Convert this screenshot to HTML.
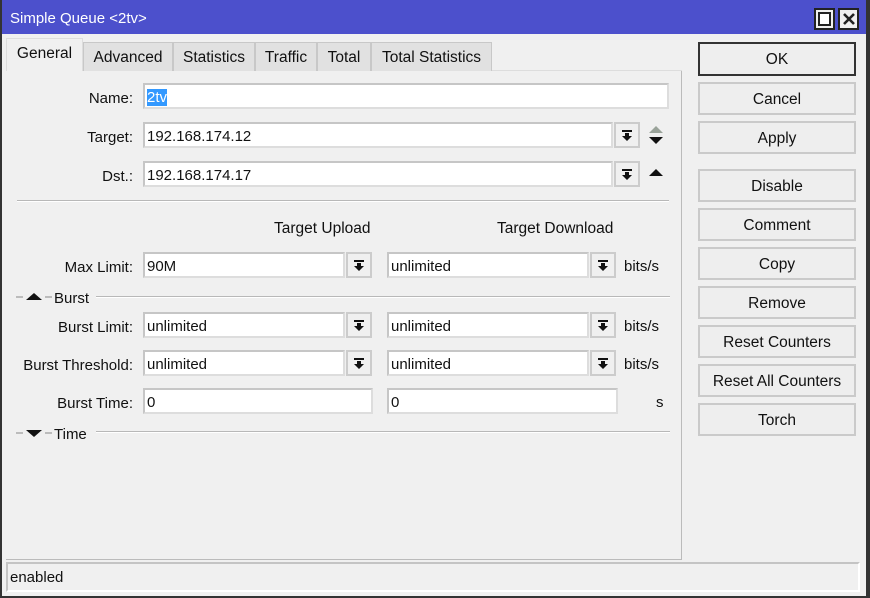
<!DOCTYPE html>
<html><head><meta charset="utf-8"><style>
*{box-sizing:border-box;margin:0;padding:0}
body{width:870px;height:598px;background:#f0f0f0;font-family:"Liberation Sans",sans-serif;font-size:15px;color:#111;position:relative;overflow:hidden}
.a{position:absolute}
.frame{left:0;top:0;width:870px;height:598px;border:2px solid #333;border-top:none;border-right:4px solid #333}
.title{left:0;top:0;width:866px;height:34px;background:#4c50cc;color:#fff;font-size:15px;padding:10px 0 0 10px}
.tb{width:21px;height:22px;background:#f0f0f0;border:2px solid #222;top:8px}
.tab{top:42px;height:29px;background:#e1e1e1;border:1px solid #c8c8c8;border-bottom:none;padding:6px 0 0;text-align:center;font-size:15.5px}
.panel{left:6px;top:70px;width:676px;height:490px;border:1px solid #bbb;border-top:1px solid #ddd;border-left:none;}
.f{height:26px;background:#fff;border:2px solid #ddd;border-top-color:#c6c6c6;border-left-color:#c6c6c6;padding:4px 0 0 2px;font-size:15px}
.dd{width:26px;height:26px;border:2px solid #ccc;background:#f0f0f0}
.dd svg{position:absolute;left:5px;top:5px}
.lbl{text-align:right;width:133px;left:0;font-size:15px}
.btn{left:698px;width:158px;height:33px;border:2px solid #cacaca;background:#eee;text-align:center;padding-top:7px;font-size:15.5px}
.ln{height:2px;border-top:1px solid #b8b8b8;border-bottom:1px solid #fff}
</style></head><body>
<div class="a title">Simple Queue &lt;2tv&gt;</div>
<div class="a tb" style="left:814px"><div class="a" style="left:2px;top:2px;width:13px;height:14px;border:2px solid #222;background:#fff"></div></div>
<div class="a tb" style="left:838px"><svg class="a" style="left:3px;top:3px" width="12" height="12"><path d="M1 1L11 11M11 1L1 11" stroke="#222" stroke-width="2.6"/></svg></div>
<div class="a frame"></div>

<div class="a panel"></div>
<div class="a tab" style="left:6px;top:38px;width:77px;height:33px;background:#f0f0f0;border-color:#ddd">General</div>
<div class="a tab" style="left:83px;width:90px">Advanced</div>
<div class="a tab" style="left:173px;width:82px">Statistics</div>
<div class="a tab" style="left:255px;width:62px">Traffic</div>
<div class="a tab" style="left:317px;width:54px">Total</div>
<div class="a tab" style="left:371px;width:121px">Total Statistics</div>
<div class="a" style="left:492px;top:70px;width:190px;height:1px;background:#ddd"></div>

<div class="a lbl" style="top:90px">Name:</div>
<div class="a f" style="left:143px;top:83px;width:526px"><span style="background:#3399ff;color:#fff">2tv</span></div>
<div class="a lbl" style="top:129px">Target:</div>
<div class="a f" style="left:143px;top:122px;width:470px">192.168.174.12</div>
<div class="a dd" style="left:614px;top:122px"><svg width="12" height="13"><rect x="1" y="1" width="10" height="2" fill="#111"/><path d="M4 4h4v3h3l-5 5l-5-5h3z" fill="#111"/></svg></div>
<svg class="a" style="left:648px;top:126px" width="16" height="20"><path d="M1 7L8 0L15 7z" fill="#9aa39a"/><path d="M1 11L8 18L15 11z" fill="#111"/></svg>
<div class="a lbl" style="top:168px">Dst.:</div>
<div class="a f" style="left:143px;top:161px;width:470px">192.168.174.17</div>
<div class="a dd" style="left:614px;top:161px"><svg width="12" height="13"><rect x="1" y="1" width="10" height="2" fill="#111"/><path d="M4 4h4v3h3l-5 5l-5-5h3z" fill="#111"/></svg></div>
<svg class="a" style="left:648px;top:168px" width="16" height="10"><path d="M1 8L8 1L15 8z" fill="#111"/></svg>

<div class="a ln" style="left:17px;top:200px;width:652px"></div>
<div class="a" style="left:274px;top:220px;font-size:15.5px">Target Upload</div>
<div class="a" style="left:497px;top:220px;font-size:15.5px">Target Download</div>

<div class="a lbl" style="top:259px">Max Limit:</div>
<div class="a f" style="left:143px;top:252px;width:202px">90M</div>
<div class="a dd" style="left:346px;top:252px"><svg width="12" height="13"><rect x="1" y="1" width="10" height="2" fill="#111"/><path d="M4 4h4v3h3l-5 5l-5-5h3z" fill="#111"/></svg></div>
<div class="a f" style="left:387px;top:252px;width:202px">unlimited</div>
<div class="a dd" style="left:590px;top:252px"><svg width="12" height="13"><rect x="1" y="1" width="10" height="2" fill="#111"/><path d="M4 4h4v3h3l-5 5l-5-5h3z" fill="#111"/></svg></div>
<div class="a" style="left:624px;top:258px">bits/s</div>

<svg class="a" style="left:16px;top:292px" width="36" height="10"><path d="M0 5h7M29 5h7" stroke="#888"/><path d="M10 8L18 1L26 8z" fill="#111"/></svg>
<div class="a" style="left:54px;top:290px">Burst</div>
<div class="a ln" style="left:96px;top:296px;width:574px"></div>

<div class="a lbl" style="top:319px">Burst Limit:</div>
<div class="a f" style="left:143px;top:312px;width:202px">unlimited</div>
<div class="a dd" style="left:346px;top:312px"><svg width="12" height="13"><rect x="1" y="1" width="10" height="2" fill="#111"/><path d="M4 4h4v3h3l-5 5l-5-5h3z" fill="#111"/></svg></div>
<div class="a f" style="left:387px;top:312px;width:202px">unlimited</div>
<div class="a dd" style="left:590px;top:312px"><svg width="12" height="13"><rect x="1" y="1" width="10" height="2" fill="#111"/><path d="M4 4h4v3h3l-5 5l-5-5h3z" fill="#111"/></svg></div>
<div class="a" style="left:624px;top:318px">bits/s</div>

<div class="a lbl" style="top:357px">Burst Threshold:</div>
<div class="a f" style="left:143px;top:350px;width:202px">unlimited</div>
<div class="a dd" style="left:346px;top:350px"><svg width="12" height="13"><rect x="1" y="1" width="10" height="2" fill="#111"/><path d="M4 4h4v3h3l-5 5l-5-5h3z" fill="#111"/></svg></div>
<div class="a f" style="left:387px;top:350px;width:202px">unlimited</div>
<div class="a dd" style="left:590px;top:350px"><svg width="12" height="13"><rect x="1" y="1" width="10" height="2" fill="#111"/><path d="M4 4h4v3h3l-5 5l-5-5h3z" fill="#111"/></svg></div>
<div class="a" style="left:624px;top:356px">bits/s</div>

<div class="a lbl" style="top:395px">Burst Time:</div>
<div class="a f" style="left:143px;top:388px;width:230px">0</div>
<div class="a f" style="left:387px;top:388px;width:231px">0</div>
<div class="a" style="left:656px;top:394px">s</div>

<svg class="a" style="left:16px;top:428px" width="36" height="10"><path d="M0 5h7M29 5h7" stroke="#888"/><path d="M10 2L18 9L26 2z" fill="#111"/></svg>
<div class="a" style="left:54px;top:426px">Time</div>
<div class="a ln" style="left:96px;top:431px;width:574px"></div>

<div class="a" style="left:6px;top:562px;width:854px;height:30px;border:2px solid #c4c4c4;border-right-color:#fff;border-bottom-color:#fff;padding:5px 0 0 2px">enabled</div>

<div class="a btn" style="top:42px;height:34px;border-color:#333">OK</div>
<div class="a btn" style="top:82px">Cancel</div>
<div class="a btn" style="top:121px">Apply</div>
<div class="a btn" style="top:169px">Disable</div>
<div class="a btn" style="top:208px">Comment</div>
<div class="a btn" style="top:247px">Copy</div>
<div class="a btn" style="top:286px">Remove</div>
<div class="a btn" style="top:325px">Reset Counters</div>
<div class="a btn" style="top:364px">Reset All Counters</div>
<div class="a btn" style="top:403px">Torch</div>
</body></html>
